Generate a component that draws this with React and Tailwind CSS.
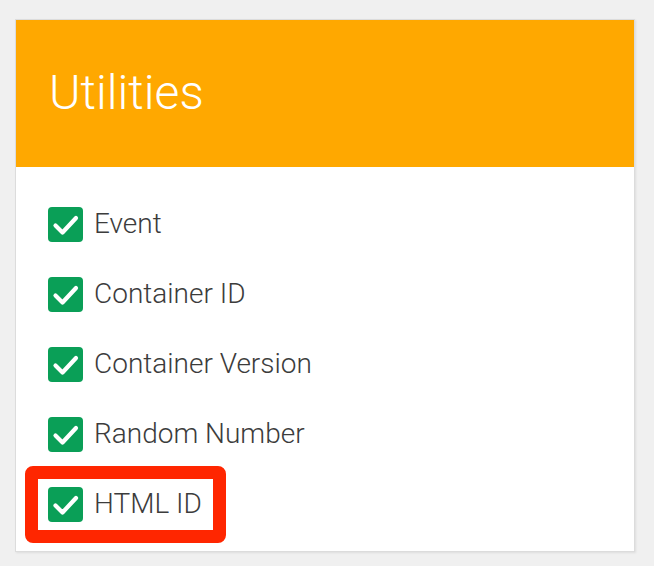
import React from 'react';

const items = ['Event', 'Container ID', 'Container Version', 'Random Number', 'HTML ID'];

const Check = () => (
    <span className="w-[35px] h-[35px] rounded-[4px] bg-[#0a9f57] flex items-center justify-center shrink-0">
        <svg width="35" height="35" viewBox="0 0 35 35">
            <path d="M7.5 18.5 L14.5 25.5 L28 11" fill="none" stroke="#fff" strokeWidth="4.2" strokeLinecap="round" strokeLinejoin="round" />
        </svg>
    </span>
);

export default function App() {
    return (
        <div className="w-[654px] h-[566px] bg-[#f0f0f0] pt-[19px] pl-[15px]" style={{ fontFamily: 'Roboto, "Noto Sans", sans-serif' }}>
            <div className="w-[620px] h-[533px] bg-white border border-[#dcdcdc] shadow-[1px_1px_2px_rgba(0,0,0,0.08)]">
                <div className="h-[147px] bg-[#ffa800] flex items-center pl-[33px]">
                    <h1 className="text-[48px] font-light text-white leading-none -mt-[2px]">Utilities</h1>
                </div>
                <div className="pt-[22px]">
                    {items.map((label, i) => (
                        <div key={label} className="relative h-[70px] flex items-center pl-[32px] gap-[11px]">
                            {i === items.length - 1 && (
                                <div className="absolute left-[9px] top-[-3px] w-[201px] h-[77px] border-[13px] border-[#ff2600] rounded-[8px]" />
                            )}
                            <Check />
                            <span className="text-[28px] font-light text-[#3c3c3c] leading-none">{label}</span>
                        </div>
                    ))}
                </div>
            </div>
        </div>
    );
}
